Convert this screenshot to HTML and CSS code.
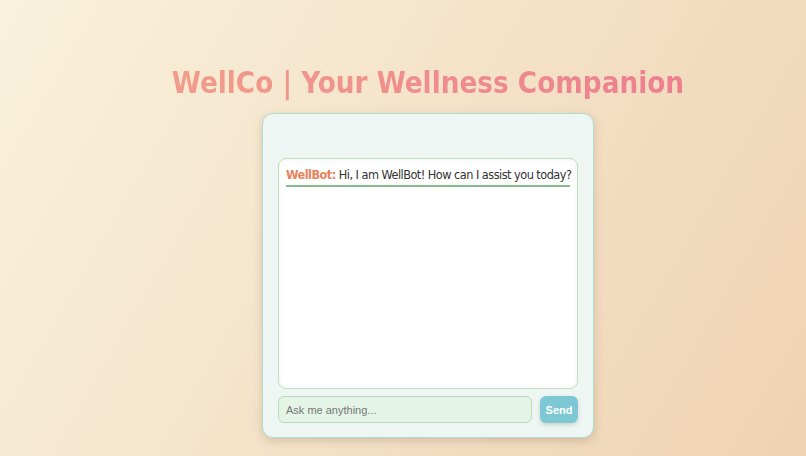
FILE: index.html
```html
<!DOCTYPE html>
<html lang="en">
<head>
<meta charset="utf-8">
<title>WellCo</title>
<link rel="stylesheet" href="styles.css">
</head>
<body>
<main class="page">
  <h1 class="title">WellCo | Your Wellness Companion</h1>
  <section class="chat-card">
    <div class="chat-log">
      <p class="msg"><span class="sender">WellBot:</span> Hi, I am WellBot! How can I assist you today?</p>
    </div>
    <form class="composer">
      <input class="ask" type="text" placeholder="Ask me anything...">
      <button class="send" type="button">Send</button>
    </form>
  </section>
</main>
</body>
</html>
```

FILE: styles.css
```css
html, body {
  margin: 0;
  height: 100%;
}
body {
  background: linear-gradient(120deg, #f9f1dc 0%, #f4e2c8 50%, #efd2b2 100%);
  font-family: "DejaVu Sans Condensed", "DejaVu Sans", sans-serif;
  overflow: hidden;
}
.page {
  display: flex;
  flex-direction: column;
  align-items: center;
  padding: 65px 0 0 50px;
}
.title {
  margin: 0;
  font-size: 29.3px;
  font-weight: bold;
  line-height: 36px;
  background: linear-gradient(90deg, #f29c8b, #ec7f90);
  -webkit-background-clip: text;
  background-clip: text;
  color: transparent;
}
.chat-card {
  margin-top: 12px;
  width: 300px;
  padding: 44px 15px 14px;
  background: #eef6f3;
  border: 1px solid #b4dccd;
  border-radius: 11px;
  box-shadow: 0 3px 8px rgba(120, 100, 80, 0.25);
  display: flex;
  flex-direction: column;
  gap: 7px;
}
.chat-log {
  height: 215px;
  background: #fff;
  border: 1px solid #bfe0c0;
  border-radius: 8px;
  padding: 7px 7px;
  box-shadow: inset 0 0 6px rgba(0, 0, 0, 0.06);
}
.msg {
  margin: 0;
  font-size: 12.6px;
  letter-spacing: -0.52px;
  white-space: nowrap;
  line-height: 18px;
  color: #333;
  padding-bottom: 1px;
  border-bottom: 2px solid #86b98a;
}
.sender {
  color: #e8825a;
  font-weight: bold;
}
.composer {
  margin: 0;
  display: flex;
  gap: 8px;
}
.ask {
  flex: 1;
  height: 27px;
  box-sizing: border-box;
  margin: 0;
  padding: 0 7px;
  background: #e4f4e6;
  border: 1px solid #b6dcb8;
  border-radius: 6px;
  font-family: "Liberation Sans", Arial, sans-serif;
  font-size: 11px;
  color: #555;
  outline: none;
}
.ask::placeholder {
  color: #777;
}
.send {
  width: 38px;
  height: 27px;
  margin: 0;
  padding: 0;
  border: none;
  border-radius: 6px;
  background: #7ec8d5;
  color: #fff;
  font-family: "Liberation Sans", Arial, sans-serif;
  font-weight: bold;
  font-size: 11px;
  box-shadow: 0 2px 4px rgba(0, 0, 0, 0.15);
}
```
